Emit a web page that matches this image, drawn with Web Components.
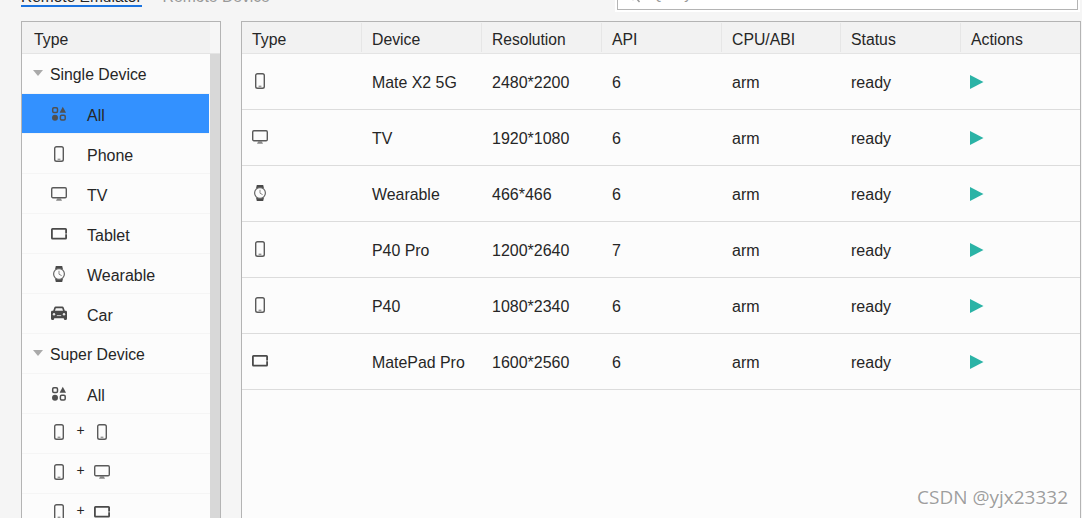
<!DOCTYPE html>
<html>
<head>
<meta charset="utf-8">
<title>Device Manager</title>
<style>
  html, body { margin: 0; height: 100%; overflow: hidden; background: #f5f5f5; }
  body { font-family: "Liberation Sans", Arial, sans-serif; font-size: 15.8px; color: #262626; }
</style>
</head>
<body>
<device-manager>
  <top-bar slot="top"></top-bar>
  <type-panel slot="left">
    <type-group>Single Device</type-group>
    <type-item selected><device-icon slot="icon" kind="all"></device-icon>All</type-item>
    <type-item><device-icon slot="icon" kind="phone"></device-icon>Phone</type-item>
    <type-item><device-icon slot="icon" kind="tv"></device-icon>TV</type-item>
    <type-item><device-icon slot="icon" kind="tablet"></device-icon>Tablet</type-item>
    <type-item><device-icon slot="icon" kind="watch"></device-icon>Wearable</type-item>
    <type-item><device-icon slot="icon" kind="car"></device-icon>Car</type-item>
    <type-group>Super Device</type-group>
    <type-item><device-icon slot="icon" kind="all"></device-icon>All</type-item>
    <type-combo second="phone"></type-combo>
    <type-combo second="tv"></type-combo>
    <type-combo second="tablet"></type-combo>
  </type-panel>
  <device-table slot="right">
    <device-row kind="phone" name="Mate X2 5G" res="2480*2200" api="6"></device-row>
    <device-row kind="tv" name="TV" res="1920*1080" api="6"></device-row>
    <device-row kind="watch" name="Wearable" res="466*466" api="6"></device-row>
    <device-row kind="phone" name="P40 Pro" res="1200*2640" api="7"></device-row>
    <device-row kind="phone" name="P40" res="1080*2340" api="6"></device-row>
    <device-row kind="tablet" name="MatePad Pro" res="1600*2560" api="6"></device-row>
  </device-table>
</device-manager>

<script>
const ICONS = {
  all: `<rect x="1.7" y="1.7" width="4.8" height="4.8" rx="1.2" fill="none" stroke="#505050" stroke-width="1.5"/>
        <path d="M11.8 .8 L15 6.8 H8.6 Z" fill="#505050"/>
        <circle cx="4" cy="11.7" r="3" fill="#505050"/>
        <rect x="9.4" y="9.2" width="4.8" height="4.8" rx="1.2" fill="none" stroke="#505050" stroke-width="1.5"/>`,
  phone: `<rect x="3.7" y=".7" width="8.6" height="14.6" rx="1.8" fill="none" stroke="#5a5a5a" stroke-width="1.4"/>
          <path d="M6.6 13.3 H9.4" stroke="#999" stroke-width="1.4"/>`,
  tv: `<rect x=".7" y="1.7" width="14.6" height="10" rx="1.2" fill="none" stroke="#5a5a5a" stroke-width="1.4"/>
       <path d="M5 14.8 H11 L9.6 12 H6.4 Z" fill="#888"/>`,
  tablet: `<rect x=".9" y="2.9" width="14.2" height="9.8" rx=".6" fill="none" stroke="#4a4a4a" stroke-width="1.8"/>
           <path d="M15 7 V8.6" stroke="#ddd" stroke-width="1"/>`,
  watch: `<path d="M4.8 0 H11.2 L12 3.4 H4 Z M4 12.6 H12 L11.2 16 H4.8 Z" fill="#4a4a4a"/>
          <circle cx="8" cy="8" r="5.4" fill="#fcfcfc" stroke="#666" stroke-width="1.2"/>
          <path d="M8 4.8 V8.2 L10.6 9.6" fill="none" stroke="#888" stroke-width="1"/>`,
  car: `<path d="M3.2 1.8 Q3.6 .6 4.8 .6 H11.2 Q12.4 .6 12.8 1.8 L13.8 4.8 H15.2 Q16 5.2 16 6.2 V12.6 Q16 14 15 14 H13.8 Q12.8 14 12.8 12.6 V12.2 H3.2 V12.6 Q3.2 14 2.2 14 H1 Q0 14 0 12.6 V6.2 Q0 5.2 .8 4.8 H2.2 Z" fill="#4a4a4a"/>
        <path d="M4.8 2.2 H11.2 L12 4.8 H4 Z" fill="#f4f4f4"/>
        <circle cx="3" cy="8.2" r="1.2" fill="#e8e8e8"/><circle cx="13" cy="8.2" r="1.2" fill="#e8e8e8"/>
        <path d="M5.8 9.6 H10.2" stroke="#ccc" stroke-width="1"/>`
};

class DeviceIcon extends HTMLElement {
  connectedCallback() {
    this.attachShadow({ mode: 'open' });
    this.shadowRoot.innerHTML = `
      <style>
        :host { display: block; width: 16px; height: 16px; flex: none; }
        svg { display: block; }
      </style>
      <svg width="16" height="16" viewBox="0 0 16 16">${ICONS[this.getAttribute('kind')]}</svg>`;
  }
}
customElements.define('device-icon', DeviceIcon);

class DeviceManager extends HTMLElement {
  connectedCallback() {
    this.attachShadow({ mode: 'open' });
    this.shadowRoot.innerHTML = `
      <style>
        :host { display: flex; flex-direction: column; height: calc(100vh + 24px); margin-top: -24px; }
        .main { flex: 1; min-height: 0; display: flex; gap: 20px; padding-left: 21px; }
        .wm {
          position: absolute; left: 917px; top: 485px;
          font: 19px "Open Sans", "Liberation Sans", sans-serif; line-height: 24px;
          color: rgba(120,120,120,.72); text-shadow: 1px 1px 1px rgba(255,255,255,.8);
          white-space: nowrap;
        }
      </style>
      <slot name="top"></slot>
      <div class="main">
        <slot name="left"></slot>
        <slot name="right"></slot>
      </div>
      <div class="wm">CSDN @yjx23332</div>`;
  }
}
customElements.define('device-manager', DeviceManager);

class TopBar extends HTMLElement {
  connectedCallback() {
    this.attachShadow({ mode: 'open' });
    this.shadowRoot.innerHTML = `
      <style>
        :host { display: flex; justify-content: space-between; align-items: flex-start; height: 45px; padding: 0 2px 0 21px; }
        .tabs { display: flex; gap: 21px; font-size: 15.5px; }
        .tab { padding-top: 13px; line-height: 16px; border-bottom: 2px solid transparent; white-space: nowrap; color: #999; font-size: 15.7px; }
        .tab.on { color: #262626; border-bottom-color: #1a73e0; font-size: 15.5px; }
        .halo { background: #fff; padding: 0 2px 2px; }
        .search {
          width: 459px; height: 32px; border: 1px solid #b4b4b4; background: #fff;
          display: flex; align-items: flex-end; color: #999; font-size: 15px;
        }
        .search svg { flex: none; margin: 0 0 5px 9px; }
        .search span { line-height: 19px; margin: 0 0 6px 10px; }
      </style>
      <div class="tabs">
        <div class="tab on">Remote Emulator</div>
        <div class="tab">Remote Device</div>
      </div>
      <div class="halo">
        <div class="search">
          <svg width="14" height="14" viewBox="0 0 14 14"><circle cx="6" cy="5" r="4.5" fill="none" stroke="#999" stroke-width="1.3"/><path d="M9.5 8.5 L12.5 12" stroke="#999" stroke-width="1.5"/></svg>
          <span>Query</span>
        </div>
      </div>`;
  }
}
customElements.define('top-bar', TopBar);

class TypePanel extends HTMLElement {
  connectedCallback() {
    this.attachShadow({ mode: 'open' });
    this.shadowRoot.innerHTML = `
      <style>
        :host {
          display: grid; grid-template-columns: 188px 10px; grid-template-rows: 32px 1fr;
          width: 198px; border: 1px solid #b4b4b4; border-bottom: 0; background: #fcfcfc; overflow: hidden;
        }
        .head { background: #f2f2f2; border-bottom: 1px solid #e4e4e4; box-sizing: border-box; padding: 1px 0 0 12px; line-height: 34px; height: 32px; overflow: hidden; }
        .corner { background: #f6f6f6; border-bottom: 1px solid #e4e4e4; box-sizing: border-box; }
        .list { min-height: 0; }
        .bar { background: #d8d8d8; }
      </style>
      <div class="head">Type</div>
      <div class="corner"></div>
      <div class="list"><slot></slot></div>
      <div class="bar"></div>`;
  }
}
customElements.define('type-panel', TypePanel);

class TypeGroup extends HTMLElement {
  connectedCallback() {
    this.attachShadow({ mode: 'open' });
    this.shadowRoot.innerHTML = `
      <style>
        :host {
          display: flex; align-items: center; height: 40px; box-sizing: border-box;
          padding: 2px 0 0 11px; gap: 7px; border-bottom: 1px solid #f5f5f5;
        }
        i { width: 0; height: 0; border: 5px solid transparent; border-top: 6px solid #aaa; border-bottom: 0; margin-top: -4px; }
      </style>
      <i></i><span><slot></slot></span>`;
  }
}
customElements.define('type-group', TypeGroup);

class TypeItem extends HTMLElement {
  connectedCallback() {
    this.attachShadow({ mode: 'open' });
    this.shadowRoot.innerHTML = `
      <style>
        :host {
          display: flex; align-items: center; height: 40px; box-sizing: border-box; font-size: 16px;
          padding: 4px 0 0 29px; gap: 20px; border-bottom: 1px solid #f5f5f5;
        }
        :host([selected]) { background: #3391ff; margin-right: 1px; }
        .ic { display: flex; margin-top: -3px; }
      </style>
      <span class="ic"><slot name="icon"></slot></span>
      <span><slot></slot></span>`;
  }
}
customElements.define('type-item', TypeItem);

class TypeCombo extends HTMLElement {
  connectedCallback() {
    const second = this.getAttribute('second');
    this.attachShadow({ mode: 'open' });
    this.shadowRoot.innerHTML = `
      <style>
        :host {
          display: flex; align-items: center; height: 40px; box-sizing: border-box;
          padding: 0 0 4px 29px; border-bottom: 1px solid #f5f5f5;
        }
        span { font-size: 14px; width: 27px; text-align: center; margin-top: -3px; }
      </style>
      <device-icon kind="phone"></device-icon>
      <span>+</span>
      <device-icon kind="${second}"></device-icon>`;
  }
}
customElements.define('type-combo', TypeCombo);

const COLS = '120px 120px 120px 120px 119px 120px 1fr';

class DeviceTable extends HTMLElement {
  connectedCallback() {
    const heads = ['Type', 'Device', 'Resolution', 'API', 'CPU/ABI', 'Status', 'Actions'];
    this.attachShadow({ mode: 'open' });
    this.shadowRoot.innerHTML = `
      <style>
        :host { display: block; width: 838px; border: 1px solid #b4b4b4; border-bottom: 0; background: #fcfcfc; }
        .head {
          display: grid; grid-template-columns: ${COLS}; height: 32px; box-sizing: border-box;
          background: #f2f2f2; border-bottom: 1px solid #e4e4e4;
        }
        .head div { padding-left: 10px; line-height: 34px; margin-top: 1px; height: 29px; box-shadow: inset -1px 0 0 #e6e6e6; }
        .head div:nth-child(3) { font-size: 15.6px; }
        .head div:last-child { box-shadow: none; }
      </style>
      <div class="head">${heads.map(h => `<div>${h}</div>`).join('')}</div>
      <slot></slot>`;
  }
}
customElements.define('device-table', DeviceTable);

class DeviceRow extends HTMLElement {
  connectedCallback() {
    const a = n => this.getAttribute(n);
    this.attachShadow({ mode: 'open' });
    this.shadowRoot.innerHTML = `
      <style>
        :host {
          display: grid; grid-template-columns: ${COLS}; align-items: center; height: 56px; box-sizing: border-box;
          padding-top: 2px; border-bottom: 1px solid #dcdcdc; font-size: 16px;
        }
        div { padding-left: 10px; }
        .name { font-size: 15.9px; }
        .ic { margin-top: -4px; }
        svg { display: block; margin: -1px 0 0 -1px; }
      </style>
      <div class="ic"><device-icon kind="${a('kind')}"></device-icon></div>
      <div class="name">${a('name')}</div>
      <div>${a('res')}</div>
      <div>${a('api')}</div>
      <div>arm</div>
      <div>ready</div>
      <div><svg width="14" height="14" viewBox="0 0 14 14"><path d="M0 0 L13.5 7 L0 14 Z" fill="#2bb3a6"/></svg></div>`;
  }
}
customElements.define('device-row', DeviceRow);
</script>
</body>
</html>
